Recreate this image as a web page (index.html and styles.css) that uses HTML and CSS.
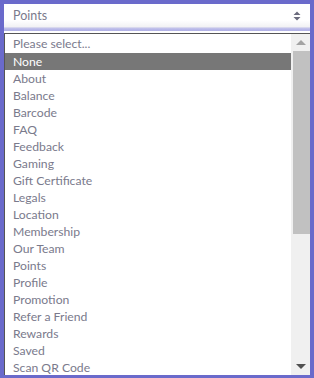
FILE: index.html
```html
<!DOCTYPE html>
<html lang="en">
<head>
  <meta charset="UTF-8">
  <title>Select</title>
  <link rel="stylesheet" href="styles.css">
</head>
<body>
  <div class="frame">
    <div class="select">
      <span class="value">Points</span>
      <svg class="updown" width="8" height="10" viewBox="0 0 8 10"><path d="M4 0.5 L7.5 4 H0.5 Z M4 9.5 L7.5 6 H0.5 Z" fill="#6b6b7d"/></svg>
    </div>
    <div class="sep"></div>
    <div class="list">
      <ul class="options">
        <li>Please select...</li>
        <li class="active">None</li>
        <li>About</li>
        <li>Balance</li>
        <li>Barcode</li>
        <li>FAQ</li>
        <li>Feedback</li>
        <li>Gaming</li>
        <li>Gift Certificate</li>
        <li>Legals</li>
        <li>Location</li>
        <li>Membership</li>
        <li>Our Team</li>
        <li>Points</li>
        <li>Profile</li>
        <li>Promotion</li>
        <li>Refer a Friend</li>
        <li>Rewards</li>
        <li>Saved</li>
        <li>Scan QR Code</li>
      </ul>
      <div class="scrollbar">
        <div class="arrow up"></div>
        <div class="thumb"></div>
        <div class="track"></div>
        <div class="arrow down"></div>
      </div>
    </div>
  </div>
</body>
</html>
```

FILE: styles.css
```css
html, body { margin: 0; padding: 0; }
body { background: #6a6acb; font-family: "Lato", "Open Sans", sans-serif; }
.frame { width: 306px; height: 371px; padding: 4px 4px 3px 4px; display: flex; flex-direction: column; overflow: hidden; }
.select { height: 23px; background: linear-gradient(#fff 0, #fff 70%, #f1f1f4 100%); display: flex; align-items: center; justify-content: space-between; padding: 0 9px 0 9px; font-size: 12.5px; color: #7a7a8c; }
.updown { display: block; }
.sep { height: 6px; background: linear-gradient(#e4e4ee 0, #b9b9ea 30%, #b3b3e6 60%, #fff 61%, #fff 83%, #fff 84%); border-bottom: 1px solid #555; }
.list { flex: 1; display: flex; min-height: 0; background: #fff; border-left: 1px solid #555; }
.options { list-style: none; margin: 0; padding: 1px 0 0 0; flex: 1; overflow: hidden; }
.options li { height: 17px; line-height: 17px; padding-left: 8px; font-size: 12.2px; color: #7a7a8c; white-space: nowrap; }
.options li:first-child { height: 18px; }
.options li.active { background: #777; color: #fff; }
.scrollbar { width: 19px; background: #f0f0f0; display: flex; flex-direction: column; }
.arrow { height: 17px; display: flex; align-items: center; justify-content: center; }
.arrow::before { content: ""; width: 0; height: 0; border-left: 5px solid transparent; border-right: 5px solid transparent; }
.arrow.up::before { border-bottom: 5px solid #a3a3a3; }
.arrow.down::before { border-top: 5px solid #505050; }
.thumb { height: 183px; margin-left: 2px; background: #c1c1c1; }
.track { flex: 1; }
```
